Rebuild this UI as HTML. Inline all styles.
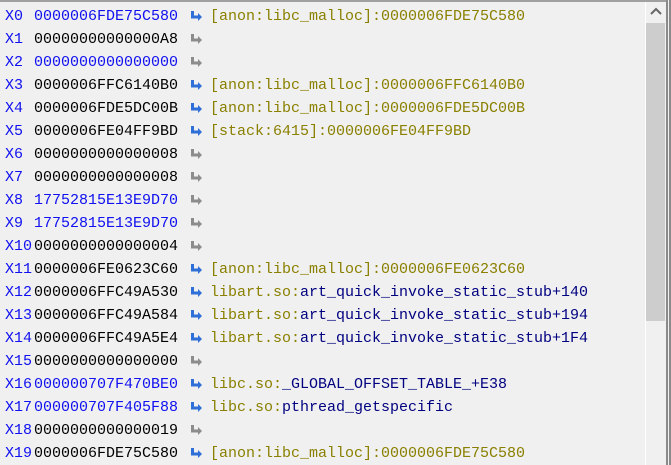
<!DOCTYPE html><html><head><style>
body{margin:0;width:671px;height:465px;background:#f0f0f0;overflow:hidden;position:relative;font-family:"Liberation Mono",monospace;font-size:15px}
.top{position:absolute;left:0;top:0;width:666px;height:2px;background:#a0a0a0}
.r1{position:absolute;left:666px;top:0;width:2px;height:465px;background:#8a8a8a}
.r2{position:absolute;left:669px;top:0;width:2px;height:465px;background:#8a8a8a}
.sb{position:absolute;left:645px;top:2px;width:1px;height:463px;background:#fff}
.tr{position:absolute;left:646px;top:2px;width:20px;height:463px;background:#f0f0f0}
.th{position:absolute;left:646px;top:23px;width:19px;height:298px;background:#cdcdcd}
.row{position:absolute;left:0;height:23px;line-height:23px;white-space:nowrap}
.reg{position:absolute;left:5px;color:#1010f0}
.val{position:absolute;left:34px}
.ar{position:absolute;left:190px;top:6px}
.an{position:absolute;left:210px}
.b{color:#1010f0}.k{color:#000}.o{color:#8a8000}.n{color:#000080}
</style></head><body>
<div class="top"></div><div class="tr"></div><div class="sb"></div><div class="th"></div>
<svg style="position:absolute;left:648px;top:5px" width="16" height="12"><path d="M3 9 L8 4 L13 9" stroke="#666" stroke-width="2" fill="none"/></svg>
<div class="r1"></div><div class="r2"></div>
<div id="rows"></div>
<script>
var d=[["X0","0000006FDE75C580","b",1,[["o","[anon:libc_malloc]:0000006FDE75C580"]]],
["X1","00000000000000A8","k",0,[]],
["X2","0000000000000000","b",0,[]],
["X3","0000006FFC6140B0","k",1,[["o","[anon:libc_malloc]:0000006FFC6140B0"]]],
["X4","0000006FDE5DC00B","k",1,[["o","[anon:libc_malloc]:0000006FDE5DC00B"]]],
["X5","0000006FE04FF9BD","k",1,[["o","[stack:6415]:0000006FE04FF9BD"]]],
["X6","0000000000000008","k",0,[]],
["X7","0000000000000008","k",0,[]],
["X8","17752815E13E9D70","b",0,[]],
["X9","17752815E13E9D70","b",0,[]],
["X10","0000000000000004","k",0,[]],
["X11","0000006FE0623C60","k",1,[["o","[anon:libc_malloc]:0000006FE0623C60"]]],
["X12","0000006FFC49A530","k",1,[["o","libart.so:"],["n","art_quick_invoke_static_stub+140"]]],
["X13","0000006FFC49A584","k",1,[["o","libart.so:"],["n","art_quick_invoke_static_stub+194"]]],
["X14","0000006FFC49A5E4","k",1,[["o","libart.so:"],["n","art_quick_invoke_static_stub+1F4"]]],
["X15","0000000000000000","k",0,[]],
["X16","000000707F470BE0","b",1,[["o","libc.so:"],["n","_GLOBAL_OFFSET_TABLE_+E38"]]],
["X17","000000707F405F88","b",1,[["o","libc.so:"],["n","pthread_getspecific"]]],
["X18","0000000000000019","k",0,[]],
["X19","0000006FDE75C580","k",1,[["o","[anon:libc_malloc]:0000006FDE75C580"]]]];
var h="";
d.forEach(function(r,i){
var c=r[3]?"#2f6fd8":"#8c8c8c";
h+='<div class="row" style="top:'+(4.5+i*23.05)+'px"><span class="reg">'+r[0]+'</span><span class="val '+r[2]+'">'+r[1]+'</span>'+
'<svg class="ar" width="13" height="11"><path d="M2.5 0 V6 H9" stroke="'+c+'" stroke-width="3" fill="none"/><path d="M8 2 L12 6 L8 10Z" fill="'+c+'"/></svg><span class="an">';
r[4].forEach(function(s){h+='<span class="'+s[0]+'">'+s[1]+'</span>'});
h+='</span></div>';});
document.getElementById("rows").innerHTML=h;
</script>
</body></html>
